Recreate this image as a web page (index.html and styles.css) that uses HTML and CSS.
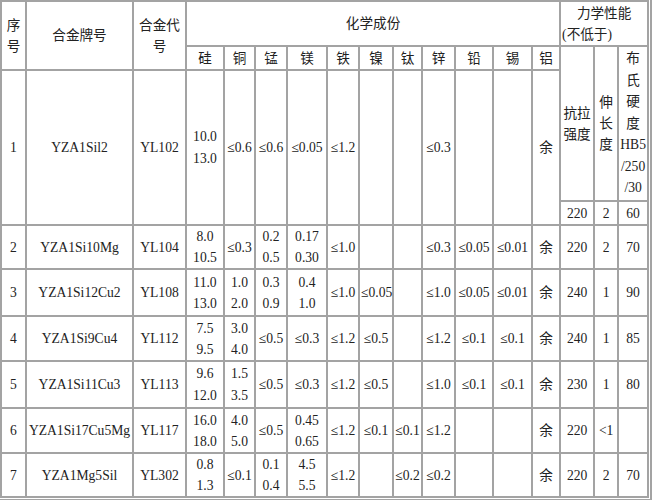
FILE: index.html
```html
<!DOCTYPE html>
<html lang="zh-CN">
<head>
<meta charset="utf-8">
<title>压铸铝合金</title>
<link rel="stylesheet" href="styles.css">
</head>
<body>
<div class="frame">
<table class="alloy">
  <colgroup>
    <col class="c1"><col class="c2"><col class="c3"><col class="c4"><col class="c5"><col class="c6"><col class="c7"><col class="c8"><col class="c9"><col class="c10"><col class="c11"><col class="c12"><col class="c13"><col class="c14"><col class="c15"><col class="c16"><col class="c17">
  </colgroup>
  <tr class="ha">
    <th rowspan="2">序<br>号</th>
    <th rowspan="2">合金牌号</th>
    <th rowspan="2">合金代<br>号</th>
    <th colspan="11">化学成份</th>
    <th colspan="3" class="mech"><span class="mt">力学性能</span><span class="ms">(不低于)</span></th>
  </tr>
  <tr class="hb">
    <th>硅</th><th>铜</th><th>锰</th><th>镁</th><th>铁</th><th>镍</th><th>钛</th><th>锌</th><th>铅</th><th>锡</th><th>铝</th>
    <th rowspan="2">抗拉<br>强度</th>
    <th rowspan="2">伸<br>长<br>度</th>
    <th rowspan="2" class="hbv">布<br>氏<br>硬<br>度<br>HB5<br>/250<br>/30</th>
  </tr>
  <tr class="r1a">
    <td rowspan="2">1</td><td rowspan="2" class="nm">YZA1Sil2</td><td rowspan="2">YL102</td>
    <td rowspan="2" class="wide">10.0<br>13.0</td><td rowspan="2">≤0.6</td><td rowspan="2">≤0.6</td><td rowspan="2">≤0.05</td>
    <td rowspan="2">≤1.2</td><td rowspan="2"></td><td rowspan="2"></td><td rowspan="2">≤0.3</td><td rowspan="2"></td><td rowspan="2"></td><td rowspan="2">余</td>
  </tr>
  <tr class="r1b"><td>220</td><td>2</td><td>60</td></tr>
  <tr class="r2">
    <td>2</td><td class="nm">YZA1Si10Mg</td><td>YL104</td>
    <td>8.0<br>10.5</td><td>≤0.3</td><td>0.2<br>0.5</td><td>0.17<br>0.30</td>
    <td>≤1.0</td><td></td><td></td><td>≤0.3</td><td>≤0.05</td><td>≤0.01</td><td>余</td>
    <td>220</td><td>2</td><td>70</td>
  </tr>
  <tr class="r3">
    <td>3</td><td class="nm">YZA1Si12Cu2</td><td>YL108</td>
    <td>11.0<br>13.0</td><td>1.0<br>2.0</td><td>0.3<br>0.9</td><td>0.4<br>1.0</td>
    <td>≤1.0</td><td>≤0.05</td><td></td><td>≤1.0</td><td>≤0.05</td><td>≤0.01</td><td>余</td>
    <td>240</td><td>1</td><td>90</td>
  </tr>
  <tr class="r4">
    <td>4</td><td class="nm">YZA1Si9Cu4</td><td>YL112</td>
    <td>7.5<br>9.5</td><td>3.0<br>4.0</td><td>≤0.5</td><td>≤0.3</td>
    <td>≤1.2</td><td>≤0.5</td><td></td><td>≤1.2</td><td>≤0.1</td><td>≤0.1</td><td>余</td>
    <td>240</td><td>1</td><td>85</td>
  </tr>
  <tr class="r5">
    <td>5</td><td class="nm">YZA1Si11Cu3</td><td>YL113</td>
    <td class="wide">9.6<br>12.0</td><td class="wide">1.5<br>3.5</td><td>≤0.5</td><td>≤0.3</td>
    <td>≤1.2</td><td>≤0.5</td><td></td><td>≤1.0</td><td>≤0.1</td><td>≤0.1</td><td>余</td>
    <td>230</td><td>1</td><td>80</td>
  </tr>
  <tr class="r6">
    <td>6</td><td class="nm">YZA1Si17Cu5Mg</td><td>YL117</td>
    <td>16.0<br>18.0</td><td>4.0<br>5.0</td><td>≤0.5</td><td>0.45<br>0.65</td>
    <td>≤1.2</td><td>≤0.1</td><td>≤0.1</td><td>≤1.2</td><td></td><td></td><td>余</td>
    <td>220</td><td>&lt;1</td><td></td>
  </tr>
  <tr class="r7">
    <td>7</td><td class="nm">YZA1Mg5Sil</td><td>YL302</td>
    <td>0.8<br>1.3</td><td>≤0.1</td><td>0.1<br>0.4</td><td>4.5<br>5.5</td>
    <td>≤1.2</td><td></td><td>≤0.2</td><td>≤0.2</td><td></td><td></td><td>余</td>
    <td>220</td><td>2</td><td>70</td>
  </tr>
</table>
</div>
</body>
</html>
```

FILE: styles.css
```css
html, body {
  margin: 0;
  padding: 0;
  background: #ffffff;
}

.frame {
  display: inline-block;
  border-right: 2px solid #a3a3a3;
  border-bottom: 2px solid #a3a3a3;
  padding-right: 1px;
  padding-bottom: 1px;
}

.alloy {
  table-layout: fixed;
  width: 649px;
  border-collapse: separate;
  border-spacing: 0;
  border-left: 2px solid #a3a3a3;
  border-top: 2px solid #a3a3a3;
  font-family: "Liberation Serif", "Noto Sans CJK SC", serif;
  font-size: 13.6px;
  line-height: 21px;
  color: #222222;
}

.alloy th,
.alloy td {
  border-right: 2px solid #a3a3a3;
  border-bottom: 2px solid #a3a3a3;
  padding: 0 1px;
  text-align: center;
  vertical-align: middle;
  font-weight: normal;
  overflow: visible;
}

.alloy .nm { white-space: nowrap; }
.alloy .wide { line-height: 22px; }
.alloy .hbv { line-height: 21.5px; }

.mech .mt { display: block; text-align: center; }
.mech .ms { display: block; text-align: left; }

.c1 { width: 25px; }
.c2 { width: 107px; }
.c3 { width: 53px; }
.c4 { width: 38px; }
.c5 { width: 31px; }
.c6 { width: 32px; }
.c7 { width: 40px; }
.c8 { width: 32px; }
.c9 { width: 34px; }
.c10 { width: 29px; }
.c11 { width: 33px; }
.c12 { width: 38px; }
.c13 { width: 39px; }
.c14 { width: 28px; }
.c15 { width: 34px; }
.c16 { width: 24px; }
.c17 { width: 30px; }

.ha { height: 45px; }
.hb { height: 24px; }
.r1a { height: 131px; }
.r1b { height: 24px; }
.r2 { height: 43px; }
.r3 { height: 47px; }
.r4 { height: 45px; }
.r5 { height: 47px; }
.r6 { height: 45px; }
.r7 { height: 44px; }
```
